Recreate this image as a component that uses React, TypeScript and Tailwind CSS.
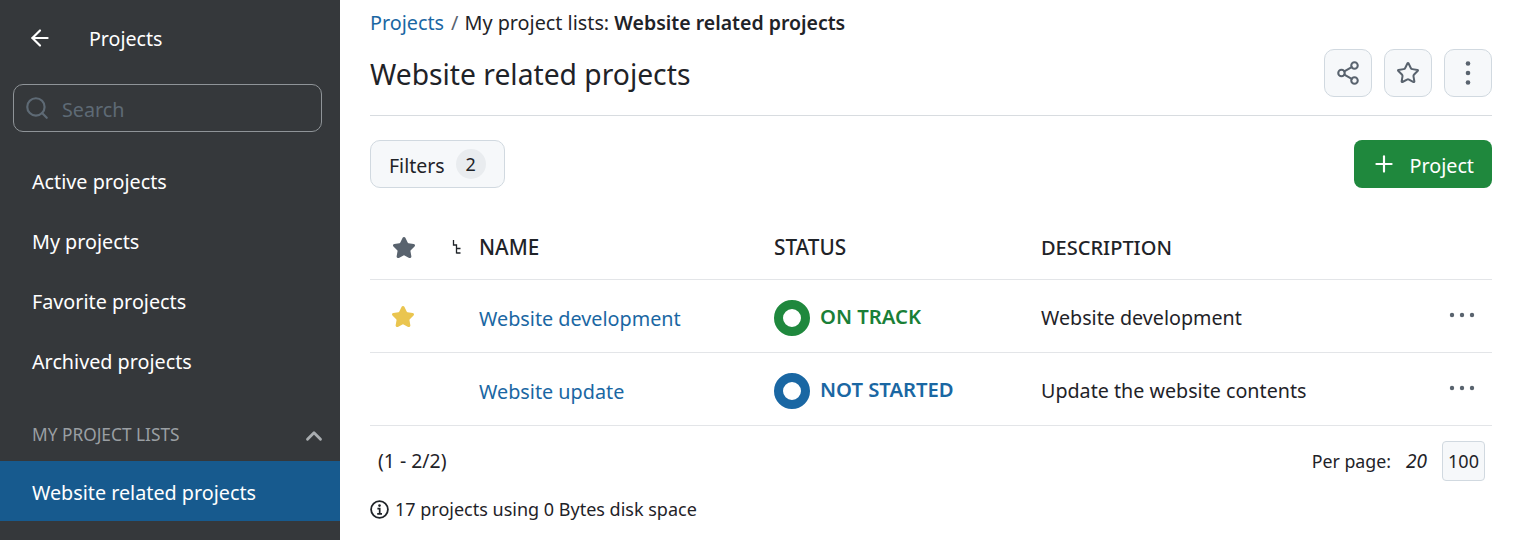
import React from "react";
import { ArrowLeft, ChevronUp, Plus, Search, Share2, Star } from "lucide-react";

const menuItems = ["Active projects", "My projects", "Favorite projects", "Archived projects"];

const projects = [
  {
    name: "Website development",
    status: "ON TRACK",
    description: "Website development",
    favorite: true,
    ring: "border-[#1f883d]",
    text: "text-[#1a7f37]",
  },
  {
    name: "Website update",
    status: "NOT STARTED",
    description: "Update the website contents",
    favorite: false,
    ring: "border-[#1a67a3]",
    text: "text-[#1a67a3]",
  },
];

const Sidebar = () => {
  return (
    <aside className="w-[340px] h-[540px] shrink-0 overflow-hidden bg-[#35383b] text-white">
      <div className="flex items-center h-[76px] pl-[27px]">
        <ArrowLeft className="w-[26px] h-[26px]" strokeWidth={2} />
        <span className="ml-[36px] mt-[2px] text-[19.6px]">Projects</span>
      </div>
      <div className="ml-[13px] mr-[18px] mt-2 h-12 flex items-center gap-[12px] pl-[10px] rounded-[10px] border border-[#8f9498]">
        <Search className="w-[26px] h-[26px] -mt-[1px] text-[#5e6a75]" strokeWidth={2} />
        <span className="mt-[3px] text-[19.75px] text-[#5e6a75]">Search</span>
      </div>
      <nav className="mt-[19px]">
        {menuItems.map((item) => (
          <div key={item} className="h-[60px] flex items-center pt-[2px] px-8 text-[19.75px]">
            {item}
          </div>
        ))}
      </nav>
      <div className="flex items-center justify-between h-[70px] pl-8 pr-[13px] pt-[17px] text-[17.3px] text-[#9a9fa3]">
        <span>MY PROJECT LISTS</span>
        <ChevronUp className="w-[26px] h-[26px] mt-[2px] text-[#a9adb0]" strokeWidth={2.6} />
      </div>
      <div className="h-[60px] flex items-center pt-[3px] px-8 text-[19.75px] bg-[#175A8E]">Website related projects</div>
    </aside>
  );
};

const IconButton = ({ children }: { children: React.ReactNode }) => (
  <button className="w-12 h-12 flex items-center justify-center rounded-[10px] border border-[#d1d9e0] bg-[#f6f8fa] text-[#59636e]">
    {children}
  </button>
);

const VerticalDots = () => (
  <svg className="w-[6px] h-[26px]" viewBox="0 0 6 26" fill="currentColor">
    <circle cx="3" cy="3.5" r="2.3" />
    <circle cx="3" cy="13" r="2.3" />
    <circle cx="3" cy="22.5" r="2.3" />
  </svg>
);

const HorizontalDots = () => (
  <svg className="w-[26px] h-[6px] mr-[17px] -mt-[9px] text-[#59636e]" viewBox="0 0 26 6" fill="currentColor">
    <circle cx="3" cy="3" r="2.2" />
    <circle cx="13" cy="3" r="2.2" />
    <circle cx="23" cy="3" r="2.2" />
  </svg>
);

const ProjectRow = ({ project }: { project: (typeof projects)[number] }) => (
  <div className="grid grid-cols-[109px_295px_267px_1fr_auto] items-center h-[73px] pt-[6px] border-b border-[#e3e5e8]">
    <div className="pl-[21px] -mt-[4px]">
      {project.favorite && <Star className="w-6 h-6 fill-[#eac54f] text-[#eac54f]" />}
    </div>
    <a className="text-[19.8px] text-[#1a67a3]">{project.name}</a>
    <div className="flex items-center gap-[10px] -mt-[3px]">
      <span className={`w-9 h-9 rounded-full border-[9px] ${project.ring}`}></span>
      <span className={`text-[20.25px] font-semibold -mt-[3px] ${project.text}`}>{project.status}</span>
    </div>
    <span className="text-[19.7px] -mt-[2px] text-[#1f2328]">{project.description}</span>
    <HorizontalDots />
  </div>
);

export default function App() {
  return (
    <div className="flex w-[1513px] h-[540px] overflow-hidden bg-white text-[#1f2328] font-['Noto_Sans',sans-serif]">
      <Sidebar />
      <main className="flex-1 min-w-0 pl-[30px] pr-[21px]">
        <div className="pt-2 h-[44px] text-[19.8px] leading-[30px] whitespace-nowrap">
          <a className="text-[#1a67a3]">Projects</a>
          <span className="ml-[7px] mr-[6px] text-[#59636e]">/</span>
          <span>My project lists: </span>
          <span className="font-semibold text-[19.5px]">Website related projects</span>
        </div>
        <div className="flex items-center justify-between h-[72px] pb-[11px] border-b border-[#d8dce0]">
          <h1 className="text-[28.25px]">Website related projects</h1>
          <div className="flex gap-3 -mt-[3px]">
            <IconButton>
              <Share2 className="w-[26px] h-[26px]" strokeWidth={1.9} />
            </IconButton>
            <IconButton>
              <Star className="w-6 h-6" strokeWidth={2} />
            </IconButton>
            <IconButton>
              <VerticalDots />
            </IconButton>
          </div>
        </div>
        <div className="flex items-center justify-between mt-6 h-12">
          <button className="h-12 flex items-center gap-[11px] pl-[18px] pr-[18px] rounded-[10px] border border-[#d1d9e0] bg-[#f6f8fa] text-[19.5px]">
            <span className="mt-[4px]">Filters</span>
            <span className="w-[30px] h-[30px] rounded-full flex items-center justify-center bg-[#e9ecef] text-[18px]">2</span>
          </button>
          <button className="h-12 flex items-center gap-[12px] pl-[17px] pr-[18px] rounded-[8px] bg-[#1f883d] text-white text-[19.75px]">
            <Plus className="w-[26px] h-[26px]" strokeWidth={2} />
            <span className="mt-[4px]">Project</span>
          </button>
        </div>
        <div className="grid grid-cols-[109px_295px_267px_1fr] items-center h-[92px] pt-[28px] border-b border-[#e3e5e8] text-[20.75px] font-medium">
          <div className="pl-[22px]">
            <Star className="w-6 h-6 fill-[#59636e] text-[#59636e]" />
          </div>
          <div className="relative">
            <svg className="absolute -left-[27px] top-[7px] w-[10px] h-[15px]" viewBox="0 0 10 15" fill="none" stroke="#1f2328" strokeWidth="1.3">
              <path d="M1.5 1v5h3v8.5M4.5 9.5h4M4.5 14h4" />
            </svg>
            NAME
          </div>
          <div>STATUS</div>
          <div className="text-[20px]">DESCRIPTION</div>
        </div>
        {projects.map((project) => (
          <ProjectRow key={project.name} project={project} />
        ))}
        <div className="flex items-center justify-between h-[70px] pl-2 pr-[7px] text-[17.8px]">
          <span className="-mt-[1px] text-[19.4px]">(1 - 2/2)</span>
          <div className="flex items-center">
            <span>Per page:</span>
            <span className="ml-[15px] italic text-[19px]">20</span>
            <span className="ml-[15px] w-[43px] h-10 flex items-center justify-center rounded-[4px] border border-[#d1d9e0] bg-[#f6f8fa] text-[18px]">100</span>
          </div>
        </div>
        <div className="flex items-center gap-[6px] h-[26px] text-[18px]">
          <svg className="w-[19px] h-[19px]" viewBox="0 0 19 19" fill="none" stroke="currentColor">
            <circle cx="9.5" cy="9.5" r="8.4" strokeWidth="1.8" />
            <circle cx="9.5" cy="5.6" r="1.3" fill="currentColor" stroke="none" />
            <path d="M7.4 8.6h2.3v5M7.2 13.9h4.8" strokeWidth="1.7" />
          </svg>
          17 projects using 0 Bytes disk space
        </div>
      </main>
    </div>
  );
}
